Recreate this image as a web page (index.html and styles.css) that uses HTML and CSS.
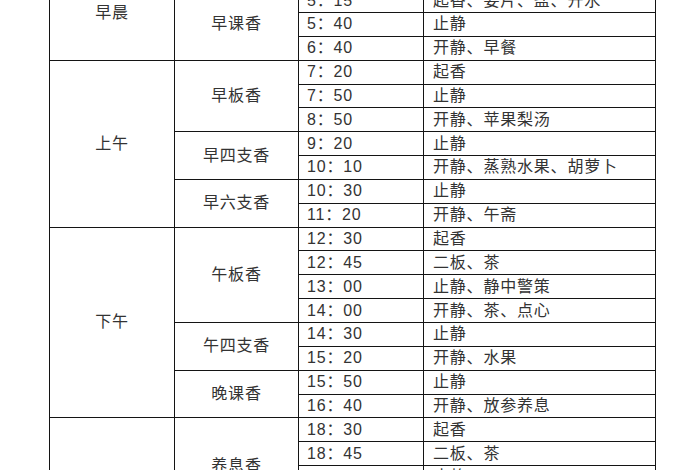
FILE: index.html
```html
<!DOCTYPE html>
<html lang="zh">
<head>
<meta charset="utf-8">
<title>作息表</title>
<link rel="stylesheet" href="styles.css">
</head>
<body>
<div class="sheet">
  <div class="grid">
    <div class="cell period" style="grid-row: 1 / span 4">早晨</div>
    <div class="cell session" style="grid-row: 1 / span 1">起床</div>
    <div class="cell time">4：30</div><div class="cell act">打板、起床</div>
    <div class="cell session" style="grid-row: 2 / span 3">早课香</div>
    <div class="cell time">5：15</div><div class="cell act">起香、姜片、盐、开水</div>
    <div class="cell time">5：40</div><div class="cell act">止静</div>
    <div class="cell time">6：40</div><div class="cell act">开静、早餐</div>

    <div class="cell period" style="grid-row: 5 / span 7">上午</div>
    <div class="cell session" style="grid-row: 5 / span 3">早板香</div>
    <div class="cell time">7：20</div><div class="cell act">起香</div>
    <div class="cell time">7：50</div><div class="cell act">止静</div>
    <div class="cell time">8：50</div><div class="cell act">开静、苹果梨汤</div>
    <div class="cell session" style="grid-row: 8 / span 2">早四支香</div>
    <div class="cell time">9：20</div><div class="cell act">止静</div>
    <div class="cell time">10：10</div><div class="cell act">开静、蒸熟水果、胡萝卜</div>
    <div class="cell session" style="grid-row: 10 / span 2">早六支香</div>
    <div class="cell time">10：30</div><div class="cell act">止静</div>
    <div class="cell time">11：20</div><div class="cell act">开静、午斋</div>

    <div class="cell period" style="grid-row: 12 / span 8">下午</div>
    <div class="cell session" style="grid-row: 12 / span 4">午板香</div>
    <div class="cell time">12：30</div><div class="cell act">起香</div>
    <div class="cell time">12：45</div><div class="cell act">二板、茶</div>
    <div class="cell time">13：00</div><div class="cell act">止静、静中警策</div>
    <div class="cell time">14：00</div><div class="cell act">开静、茶、点心</div>
    <div class="cell session" style="grid-row: 16 / span 2">午四支香</div>
    <div class="cell time">14：30</div><div class="cell act">止静</div>
    <div class="cell time">15：20</div><div class="cell act">开静、水果</div>
    <div class="cell session" style="grid-row: 18 / span 2">晚课香</div>
    <div class="cell time">15：50</div><div class="cell act">止静</div>
    <div class="cell time">16：40</div><div class="cell act">开静、放参养息</div>

    <div class="cell period" style="grid-row: 20 / span 8">晚上</div>
    <div class="cell session" style="grid-row: 20 / span 4">养息香</div>
    <div class="cell time">18：30</div><div class="cell act">起香</div>
    <div class="cell time">18：45</div><div class="cell act">二板、茶</div>
    <div class="cell time">19：00</div><div class="cell act">止静</div>
    <div class="cell time">20：00</div><div class="cell act">开静、药石</div>
    <div class="cell session" style="grid-row: 24 / span 4">晚板香</div>
    <div class="cell time">20：30</div><div class="cell act">起香</div>
    <div class="cell time">21：00</div><div class="cell act">止静</div>
    <div class="cell time">21：40</div><div class="cell act">开静</div>
    <div class="cell time">22：00</div><div class="cell act">养息</div>
  </div>
</div>
</body>
</html>
```

FILE: styles.css
```css
html, body {
  margin: 0;
  padding: 0;
  background: #ffffff;
}

body {
  overflow: hidden;
  height: 470px;
}

.sheet {
  margin-top: -35.7px;
  margin-left: 49px;
}

.grid {
  display: grid;
  width: 607px;
  box-sizing: border-box;
  grid-template-columns: 124px 123px 124px 1fr;
  grid-auto-rows: 22.85px;
  gap: 1px;
  padding: 1px;
  background: #141414;
  font-family: "Liberation Sans", "Noto Sans CJK SC", sans-serif;
  font-size: 16px;
  letter-spacing: 0.8px;
  color: #333333;
}

.cell {
  background: #ffffff;
  display: flex;
  align-items: center;
  line-height: 1;
  white-space: nowrap;
}

.period {
  grid-column: 1;
  justify-content: center;
}

.session {
  grid-column: 2;
  justify-content: center;
}

.time {
  grid-column: 3;
  padding-left: 8px;
}

.act {
  grid-column: 4;
  padding-left: 9px;
}
```
